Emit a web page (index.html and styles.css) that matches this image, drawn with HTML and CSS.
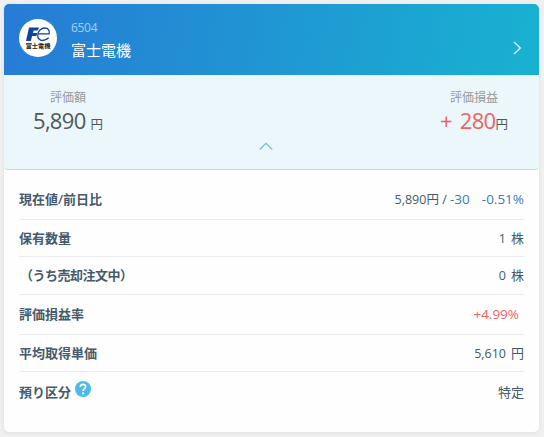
FILE: index.html
```html
<!DOCTYPE html>
<html lang="ja">

<head>
  <meta charset="UTF-8">
  <meta name="viewport" content="width=device-width, initial-scale=1">
  <title>富士電機</title>
  <link rel="stylesheet" href="styles.css">
</head>

<body>
  <div class="card">
    <header class="stock-header">
      <svg class="logo" viewBox="0 0 38 38">
        <circle cx="19" cy="19" r="19" fill="#fff" />
        <path d="M10 8.4H20L18.8 11.6H14.6L14 14H18.3L17.4 17H13.1L11.8 22H7Z" fill="#10439b" />
        <path d="M19.5 14.9H30.2C31 11.5 29 9 25.8 9C22 9 19 12 18.7 16C18.5 19.5 20.6 21.5 23.6 21.5C26 21.5 28 20.6 29.7 18.8" fill="none" stroke="#10439b" stroke-width="1.3" />
        <text x="19" y="29" class="logo-text">富士電機</text>
      </svg>
      <div class="stock-title">
        <div class="code">6504</div>
        <div class="name">富士電機</div>
      </div>
      <svg class="arrow-right" width="9" height="14" viewBox="0 0 9 14">
        <path d="M1 1L7.3 7L1 13" />
      </svg>
    </header>

    <section class="summary">
      <div class="summary-values">
        <div class="summary-item">
          <div class="label">評価額</div>
          <div class="amount"><span class="num">5,890</span><span class="yen gap">円</span></div>
        </div>
        <div class="summary-item">
          <div class="label">評価損益</div>
          <div class="amount"><span class="num plus"><span class="sign">+</span>280</span><span class="yen">円</span></div>
        </div>
      </div>
      <svg class="arrow-up" width="14" height="9" viewBox="0 0 14 9">
        <path d="M0.7 7.5L7 1.3L13.3 7.5" />
      </svg>
    </section>

    <dl class="details">
      <div class="row first">
        <dt>現在値/前日比</dt>
        <dd>5,890円 / <span class="minus">-30</span><span class="minus rate">-0.51%</span></dd>
      </div>
      <div class="row">
        <dt>保有数量</dt>
        <dd>1<span class="unit">株</span></dd>
      </div>
      <div class="row order">
        <dt>（うち売却注文中）</dt>
        <dd>0<span class="unit">株</span></dd>
      </div>
      <div class="row profit">
        <dt>評価損益率</dt>
        <dd class="plus percent">+4.99%</dd>
      </div>
      <div class="row">
        <dt>平均取得単価</dt>
        <dd>5,610<span class="unit">円</span></dd>
      </div>
      <div class="row last">
        <dt>預り区分<svg class="help" width="16" height="16" viewBox="0 0 16 16">
            <circle cx="8" cy="8" r="8" fill="#4dbbe8" />
            <path d="M5.4 6C5.4 2.5 10.7 2.7 10.7 5.8C10.7 7.7 8.1 7.8 8.1 9.9" fill="none" stroke="#fff" stroke-width="1.7" />
            <circle cx="8.1" cy="12.4" r="1.1" fill="#fff" />
          </svg></dt>
        <dd>特定</dd>
      </div>
    </dl>
  </div>
</body>

</html>
```

FILE: styles.css
```css
body {
  margin: 0;
  padding: 4px 5px 5px 4px;
  background-color: #f0f0f0;
  font-family: "Open Sans", "Noto Sans CJK JP", sans-serif;
  color: #455a6b;
}

.card {
  height: 428px;
  border-radius: 5px;
  background-color: #fefefe;
  box-shadow: 0 1px 4px rgba(0, 0, 0, 0.07);
  overflow: hidden;
}

.stock-header {
  display: flex;
  box-sizing: border-box;
  height: 71px;
  padding: 15px 17px 0 15px;
  background: linear-gradient(100deg, #277bd5, #18b2d1);
  color: #fff;
}

.logo {
  width: 38px;
  height: 38px;
}

.logo-text {
  font-size: 6.2px;
  font-weight: 700;
  fill: #222;
  text-anchor: middle;
}

.stock-title {
  flex: 1;
  margin-left: 14px;
}

.code {
  height: 18px;
  font-size: 12px;
  line-height: 18px;
  letter-spacing: -0.3px;
  color: #a5d0f2;
}

.name {
  margin-top: 2px;
  font-size: 15px;
  line-height: 22px;
}

.arrow-right {
  margin-top: 22px;
  fill: none;
  stroke: #d9f5fc;
  stroke-width: 1.3;
}

.summary {
  box-sizing: border-box;
  height: 95px;
  padding: 13px 31px 0 29px;
  border-bottom: 1px solid #b5dde8;
  border-radius: 0 0 4px 4px;
  background-color: #ebf7fa;
  text-align: center;
}

.summary-values {
  display: flex;
  justify-content: space-between;
}

.label {
  font-size: 12px;
  line-height: 20px;
  color: #949b9d;
}

.amount {
  display: flex;
  height: 30px;
  align-items: baseline;
  margin-top: -3px;
  line-height: 30px;
  color: #50575b;
}

.num {
  font-size: 22px;
  letter-spacing: -0.7px;
}

.yen {
  font-size: 12.5px;
}

.yen.gap {
  margin-left: 5px;
}

.sign {
  margin-right: 8px;
}

.plus {
  color: #ef625e;
}

.arrow-up {
  display: block;
  margin: 7px 0 0 226px;
  fill: none;
  stroke: #6ebfd4;
  stroke-width: 1.3;
}

.details {
  margin: 0;
  padding: 0 15px;
}

.row {
  display: flex;
  box-sizing: border-box;
  height: 37px;
  justify-content: space-between;
  align-items: center;
  border-bottom: 1px solid #ececee;
  font-size: 13px;
  line-height: 20px;
}

.row.first {
  height: 50px;
  padding-top: 9px;
}

.row.order {
  height: 38px;
  padding-bottom: 1px;
}

.row.order dt {
  padding-left: 1px;
  letter-spacing: -0.5px;
}

.row.profit {
  height: 40px;
  padding-bottom: 1px;
}

.row.last {
  height: 42px;
  padding-bottom: 3px;
  border-bottom: none;
}

.row dt {
  font-weight: 600;
}

.row dd {
  margin: 0;
  font-size: 12.5px;
}

.row.last dd {
  font-size: 13px;
}

.minus {
  color: #3f77bd;
  font-size: 13.5px;
}

.rate {
  margin-left: 12px;
}

.unit {
  margin-left: 5px;
  font-size: 13px;
}

.row .percent {
  margin-right: 5px;
  font-size: 13.5px;
}

.help {
  margin: 0 0 0 4px;
}
```
